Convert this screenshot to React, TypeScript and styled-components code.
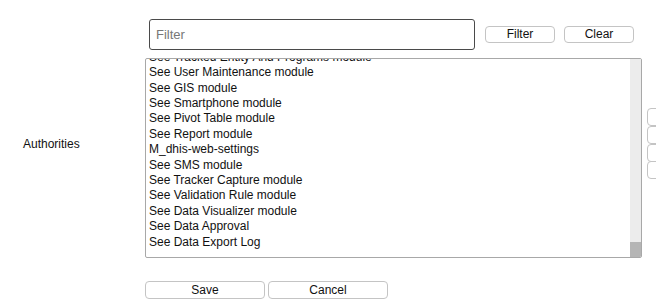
import styled, { createGlobalStyle } from "styled-components";

const items = [
  "See Tracked Entity And Programs module",
  "See User Maintenance module",
  "See GIS module",
  "See Smartphone module",
  "See Pivot Table module",
  "See Report module",
  "M_dhis-web-settings",
  "See SMS module",
  "See Tracker Capture module",
  "See Validation Rule module",
  "See Data Visualizer module",
  "See Data Approval",
  "See Data Export Log",
];

const GlobalStyle = createGlobalStyle`
  body {
    margin: 0;
    background: #ffffff;
    font-family: "Liberation Sans", Arial, sans-serif;
    font-size: 12px;
    color: #111111;
  }
`;

const App = () => {
  return (
    <>
      <GlobalStyle />
      <Page>
        <FilterRow>
          <FilterInput placeholder="Filter" />
          <SmallButton>{"Filter"}</SmallButton>
          <SmallButton>{"Clear"}</SmallButton>
        </FilterRow>

        <FieldRow>
          <Label>{"Authorities"}</Label>
          <ListBox>
            <Options>
              {items.map((item) => (
                <Option key={item}>{item}</Option>
              ))}
            </Options>
            <ScrollTrack>
              <ScrollThumb />
            </ScrollTrack>
          </ListBox>
          <MoveButtons>
            <MoveButton />
            <MoveButton />
            <MoveButton />
            <MoveButton />
          </MoveButtons>
        </FieldRow>

        <Actions>
          <ActionButton>{"Save"}</ActionButton>
          <ActionButton>{"Cancel"}</ActionButton>
        </Actions>
      </Page>
    </>
  );
};

const Page = styled.div`
  width: 656px;
  height: 308px;
  overflow: hidden;
  padding-top: 19px;
  box-sizing: border-box;
`;

const FilterRow = styled.div`
  display: flex;
  align-items: center;
  gap: 9px;
  margin-left: 149px;
`;

const FilterInput = styled.input`
  width: 326px;
  height: 31px;
  box-sizing: border-box;
  border: 1px solid #4a4a4a;
  border-radius: 3px;
  padding: 0 6px;
  margin-right: 1px;
  font-family: "Liberation Sans", Arial, sans-serif;
  font-size: 13px;
  outline: none;

  &::placeholder {
    color: #777777;
  }
`;

const SmallButton = styled.button`
  width: 70px;
  height: 17px;
  box-sizing: border-box;
  padding: 0;
  background: #ffffff;
  border: 1px solid #c4c4c4;
  border-radius: 4px;
  font-family: "Liberation Sans", Arial, sans-serif;
  font-size: 12px;
  color: #111111;
  line-height: 15px;
`;

const FieldRow = styled.div`
  display: flex;
  align-items: flex-start;
  margin-top: 8px;
`;

const Label = styled.div`
  flex-shrink: 0;
  width: 145px;
  box-sizing: border-box;
  padding: 79px 0 0 23px;
  line-height: 14px;
`;

const ListBox = styled.div`
  flex-shrink: 0;
  width: 497px;
  height: 200px;
  box-sizing: border-box;
  display: flex;
  border: 1px solid #a8a8a8;
  border-radius: 2px;
  overflow: hidden;
`;

const Options = styled.div`
  flex: 1;
  display: flex;
  flex-direction: column;
  justify-content: flex-end;
  overflow: hidden;
  padding: 0 0 7px 3px;
`;

const Option = styled.div`
  height: 15.4px;
  line-height: 15.4px;
  white-space: nowrap;
  flex-shrink: 0;
`;

const ScrollTrack = styled.div`
  width: 11px;
  background: #ececec;
  display: flex;
  flex-direction: column;
  justify-content: flex-end;
`;

const ScrollThumb = styled.div`
  height: 15px;
  background: #b5b5b5;
`;

const MoveButtons = styled.div`
  flex-shrink: 0;
  display: flex;
  flex-direction: column;
  margin: 50px 0 0 5px;
`;

const MoveButton = styled.button`
  width: 34px;
  height: 18px;
  box-sizing: border-box;
  margin-bottom: -0.25px;
  background: #ffffff;
  border: 1px solid #c4c4c4;
  border-radius: 4px;
  padding: 0;
`;

const Actions = styled.div`
  display: flex;
  gap: 3px;
  margin: 23px 0 0 145px;
`;

const ActionButton = styled.button`
  width: 120px;
  height: 18px;
  box-sizing: border-box;
  padding: 0;
  background: #ffffff;
  border: 1px solid #c4c4c4;
  border-radius: 4px;
  font-family: "Liberation Sans", Arial, sans-serif;
  font-size: 12px;
  color: #111111;
  line-height: 16px;
`;

export default App;
